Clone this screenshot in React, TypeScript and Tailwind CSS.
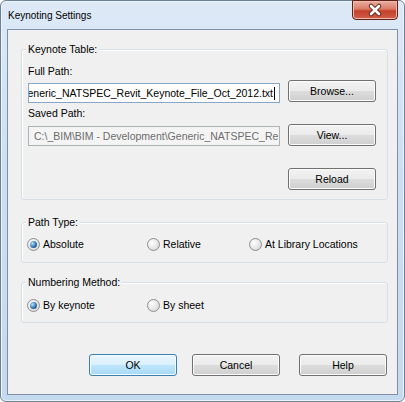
import * as React from "react";

const font = "font-['Liberation_Sans',Arial,sans-serif] text-[10.5px] leading-[13px] text-black";

function Group({ label, className, children }: { label: string; className?: string; children: React.ReactNode }) {
  return (
    <div
      className={`ml-[13px] mr-[9px] flex flex-col rounded-[3px] border border-[#d5dfe5] shadow-[inset_1px_1px_0_#ffffff] ${className ?? ""}`}
    >
      <span className="-mt-[7px] ml-[4px] self-start bg-[#f0f0f0] px-[2px]">{label}</span>
      {children}
    </div>
  );
}

function Button({ label, primary, className }: { label: string; primary?: boolean; className?: string }) {
  return (
    <div
      className={`flex h-[22px] w-[88px] shrink-0 items-center justify-center rounded-[3px] border ${
        primary
          ? "border-[#3c7fb1] bg-[linear-gradient(#eaf6fd_0%,#d9f0fc_50%,#bee6fd_50%,#a7d9f5_100%)] shadow-[inset_0_0_0_1px_#f4fbff]"
          : "border-[#707070] bg-[linear-gradient(#f2f2f2_0%,#ebebeb_50%,#dddddd_50%,#cfcfcf_100%)] shadow-[inset_0_0_0_1px_#fcfcfc]"
      } ${className ?? ""}`}
    >
      {label}
    </div>
  );
}

function Radio({ label, checked, className }: { label: string; checked?: boolean; className?: string }) {
  return (
    <div className={`flex items-center gap-[3px] ${className ?? ""}`}>
      <div className="flex h-[13px] w-[13px] shrink-0 items-center justify-center rounded-full border border-[#8f8f8f] bg-[radial-gradient(circle_at_35%_35%,#ffffff,#d0d0d0)]">
        {checked && (
          <div className="h-[7px] w-[7px] rounded-full bg-[radial-gradient(circle_at_35%_35%,#b4e2ff,#2a6aa8_60%,#174a7c)]" />
        )}
      </div>
      <span>{label}</span>
    </div>
  );
}

export default function App() {
  return (
    <div className={`${font} h-[402px] w-[405px] bg-white`}>
      <div className="flex h-full w-full flex-col rounded-[6px] border border-[#6a7f98] bg-[linear-gradient(180deg,#dde9f7_0%,#cddff2_40%,#c5d9ef_100%)] shadow-[inset_0_0_0_1px_#eef5fc]">
        {/* Title bar */}
        <div className="flex h-[28px] shrink-0 items-start justify-between">
          <span className="pl-[7px] pt-[8px] text-[10px]">Keynoting Settings</span>
          <div className="-mt-[1px] mr-[6px] h-[20px] w-[46px] rounded-b-[4px] border border-[#5e2219] bg-[linear-gradient(#eab0a2_0%,#d97a64_45%,#c4402a_55%,#d1604a_100%)] shadow-[inset_0_0_0_1px_#f0b9ab]">
            <svg width="44" height="18" viewBox="0 0 44 18">
              <path d="M18 5 L26 13 M26 5 L18 13" stroke="#5a1e16" strokeWidth="4.5" strokeLinecap="round" />
              <path d="M18 5 L26 13 M26 5 L18 13" stroke="#ffffff" strokeWidth="2.6" strokeLinecap="round" />
            </svg>
          </div>
        </div>

        {/* Content panel */}
        <div className="mx-[6px] flex h-[366px] flex-col border border-[#7f90a6] bg-[#f0f0f0]">
          <Group label="Keynote Table:" className="mt-[19px] pb-[9px]">
            <span className="ml-[6px] mt-[9px]">Full Path:</span>
            <div className="mt-[2px] flex items-start pl-[6px]">
              <div className="mt-[3px] flex h-[20px] w-[252px] items-center justify-end overflow-hidden whitespace-nowrap border border-[#86a7c8] bg-white pr-[4px]">
                <span>Generic_NATSPEC_Revit_Keynote_File_Oct_2012.txt</span>
                <span className="ml-[1px] h-[13px] w-[1px] shrink-0 bg-black" />
              </div>
              <Button label="Browse..." className="ml-[8px]" />
            </div>
            <span className="ml-[6px] mt-[4px]">Saved Path:</span>
            <div className="mt-[4px] flex items-start pl-[6px]">
              <div className="mt-[2px] flex h-[20px] w-[252px] items-center overflow-hidden whitespace-nowrap border border-[#adb2b5] bg-[#f4f4f4] pl-[5px] text-[#6d6d6d]">
                C:\_BIM\BIM - Development\Generic_NATSPEC_Re
              </div>
              <Button label="View..." className="ml-[8px]" />
            </div>
            <div className="mt-[22px] flex pl-[266px]">
              <Button label="Reload" />
            </div>
          </Group>

          <Group label="Path Type:" className="mt-[22px] pb-[11px]">
            <div className="mt-[9px] flex pl-[5px]">
              <Radio label="Absolute" checked className="w-[120px]" />
              <Radio label="Relative" className="w-[102px]" />
              <Radio label="At Library Locations" />
            </div>
          </Group>

          <Group label="Numbering Method:" className="mt-[19px] pb-[10px]">
            <div className="mt-[10px] flex pl-[5px]">
              <Radio label="By keynote" checked className="w-[120px]" />
              <Radio label="By sheet" />
            </div>
          </Group>

          <div className="mt-[31px] flex pl-[81px]">
            <Button label="OK" primary />
            <Button label="Cancel" className="ml-[15px]" />
            <Button label="Help" className="ml-[19px]" />
          </div>
        </div>
      </div>
    </div>
  );
}
